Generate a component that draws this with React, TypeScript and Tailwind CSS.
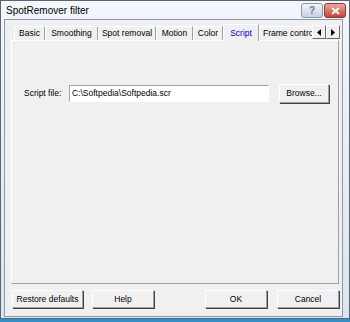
import React from 'react';

const tabs = [
  { label: 'Basic', w: 'w-[31px]' },
  { label: 'Smoothing', w: 'w-[53px]' },
  { label: 'Spot removal', w: 'w-[58px]' },
  { label: 'Motion', w: 'w-[37px]' },
  { label: 'Color', w: 'w-[30px]' },
  { label: 'Script', w: 'w-[36px]' },
];

const Btn = ({ label, className = '' }: { label: string; className?: string }) => (
  <div
    className={`flex items-center justify-center border border-t-white border-l-white border-r-[#a0a0a0] border-b-[#a0a0a0] bg-[#f0f0f0] text-[8.5px] text-black whitespace-nowrap shadow-[1px_1px_0_#404040] ${className}`}
  >
    {label}
  </div>
);

export default function App() {
  return (
    <div className="w-[350px] h-[322px] overflow-hidden bg-[#2f8fc9] font-['Liberation_Sans',Arial,sans-serif]">
      <div className="flex h-[319px] flex-col border-l border-t border-r border-b border-[#5a6676] bg-gradient-to-b from-[#f3f7fb] to-[#dce4ee]">
        {/* title bar */}
        <div className="flex h-[18px] items-start justify-between pl-[5px] pr-[3px]">
          <span className="pt-[3px] text-[10px] leading-[14px] text-black">SpotRemover filter</span>
          <div className="flex gap-[1px] pt-[2px]">
            <div className="flex h-[15px] w-[22px] items-center justify-center rounded-[3px] border border-[#8a98aa] bg-gradient-to-b from-[#f2f6fb] to-[#c3d1e2] text-[10px] font-bold leading-none text-[#6a7a8e]">
              ?
            </div>
            <div className="flex h-[15px] w-[22px] items-center justify-center rounded-[3px] border border-[#8b3b30] bg-gradient-to-b from-[#eba79b] to-[#c5432f]">
              <svg width="9" height="8" viewBox="0 0 9 8">
                <path d="M1 1 L8 7 M8 1 L1 7" stroke="white" strokeWidth="1.8" />
              </svg>
            </div>
          </div>
        </div>

        {/* client area */}
        <div className="ml-[3px] flex h-[298px] w-[339px] flex-col border border-[#8d99a8] bg-[#f0f0f0]">
          {/* tab strip */}
          <div className="flex h-[20px] items-end pl-[9px] pt-[4px]">
            {tabs.map((t) => {
              const sel = t.label === 'Script';
              return (
                <div
                  key={t.label}
                  className={`flex shrink-0 items-center justify-center border-l border-t border-r border-l-white border-t-white border-r-[#a0a0a0] text-[8.5px] whitespace-nowrap ${t.w} ${
                    sel ? 'relative z-10 mb-[-1px] h-[17px] bg-[#f0f0f0] text-[#0000e0]' : 'h-[14px] text-black'
                  }`}
                >
                  {t.label}
                </div>
              );
            })}
            <div className="flex h-[14px] w-[53px] shrink-0 items-center border-l border-t border-l-white border-t-white pl-[3px] text-[8.5px] whitespace-nowrap text-black">
              Frame contro
            </div>
            <div className="mb-[1px] flex">
              {['M4 0 L0 3.5 L4 7Z', 'M0 0 L4 3.5 L0 7Z'].map((d) => (
                <div
                  key={d}
                  className="flex h-[14px] w-[14px] items-center justify-center border border-t-white border-l-white border-r-[#696969] border-b-[#696969] bg-[#f0f0f0]"
                >
                  <svg width="4" height="7" viewBox="0 0 4 7">
                    <path d={d} fill="black" />
                  </svg>
                </div>
              ))}
            </div>
          </div>

          {/* tab page */}
          <div className="ml-[6px] h-[244px] w-[328px] border border-t-white border-l-white border-r-[#a0a0a0] border-b-[#a0a0a0] pt-[43px] pl-[12px]">
            <div className="flex items-center">
              <span className="w-[45px] text-[8.5px] text-black">Script file:</span>
              <div className="flex h-[17px] w-[200px] items-center border border-t-[#a0a0a0] border-l-[#a0a0a0] border-r-white border-b-white bg-white px-[2px] text-[8.5px] text-black">
                C:\Softpedia\Softpedia.scr
              </div>
              <Btn label="Browse..." className="ml-[10px] h-[19px] w-[50px]" />
            </div>
          </div>

          {/* bottom buttons */}
          <div className="mt-[6px] flex pl-[7px]">
            <Btn label="Restore defaults" className="h-[18px] w-[71px]" />
            <Btn label="Help" className="ml-[9px] h-[18px] w-[62px]" />
            <Btn label="OK" className="ml-[51px] h-[18px] w-[62px]" />
            <Btn label="Cancel" className="ml-[10px] h-[18px] w-[62px]" />
          </div>
        </div>
      </div>
    </div>
  );
}
